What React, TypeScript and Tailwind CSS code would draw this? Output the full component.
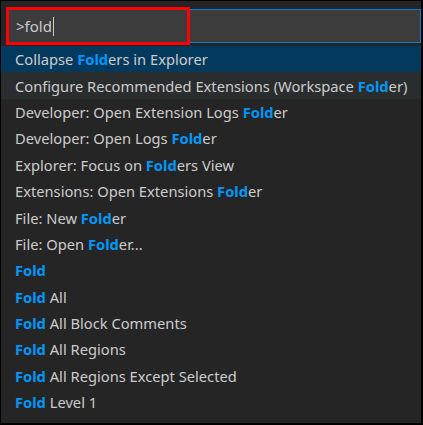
type Item = { parts: [string, boolean][] };

const items: Item[] = [
  { parts: [["Collapse ", false], ["Fold", true], ["ers in Explorer", false]] },
  { parts: [["Configure Recommended Extensions (Workspace ", false], ["Fold", true], ["er)", false]] },
  { parts: [["Developer: Open Extension Logs ", false], ["Fold", true], ["er", false]] },
  { parts: [["Developer: Open Logs ", false], ["Fold", true], ["er", false]] },
  { parts: [["Explorer: Focus on ", false], ["Fold", true], ["ers View", false]] },
  { parts: [["Extensions: Open Extensions ", false], ["Fold", true], ["er", false]] },
  { parts: [["File: New ", false], ["Fold", true], ["er", false]] },
  { parts: [["File: Open ", false], ["Fold", true], ["er...", false]] },
  { parts: [["Fold", true]] },
  { parts: [["Fold", true], [" All", false]] },
  { parts: [["Fold", true], [" All Block Comments", false]] },
  { parts: [["Fold", true], [" All Regions", false]] },
  { parts: [["Fold", true], [" All Regions Except Selected", false]] },
  { parts: [["Fold", true], [" Level 1", false]] },
];

export default function App() {
  return (
    <div
      className="relative h-[425px] w-[423px] overflow-hidden border-t border-l border-r-2 border-b-2 border-black bg-[#252526] text-[#cccccc]"
      style={{ fontFamily: '"Noto Sans", "Open Sans", sans-serif' }}
    >
      <div className="pt-[8px] pl-[5px]">
        <div className="flex h-[34px] items-center border border-[#007fd4] bg-[#3c3c3c] pl-[9px] text-[15px]">
          <span>&gt;fold</span>
          <span className="ml-[1px] h-[19px] w-px bg-[#cccccc]" />
        </div>
      </div>

      <div className="mt-[3px] flex flex-col">
        {items.map((item, i) => (
          <div
            key={i}
            className={`flex h-[26.4px] items-center pl-[14px] text-[14.7px] whitespace-pre ${
              i === 0 ? "bg-[#04395e]" : i === 1 ? "bg-[#2a2d2e]" : ""
            }`}
          >
            <span>
              {item.parts.map(([t, hl], j) => (
                <span key={j} className={hl ? "font-bold text-[#0097fb]" : ""}>
                  {t}
                </span>
              ))}
            </span>
          </div>
        ))}
      </div>

      <div className="pointer-events-none absolute top-[6px] left-[5px] h-[38px] w-[184px] border-[3px] border-[#ff0000]" />
    </div>
  );
}
